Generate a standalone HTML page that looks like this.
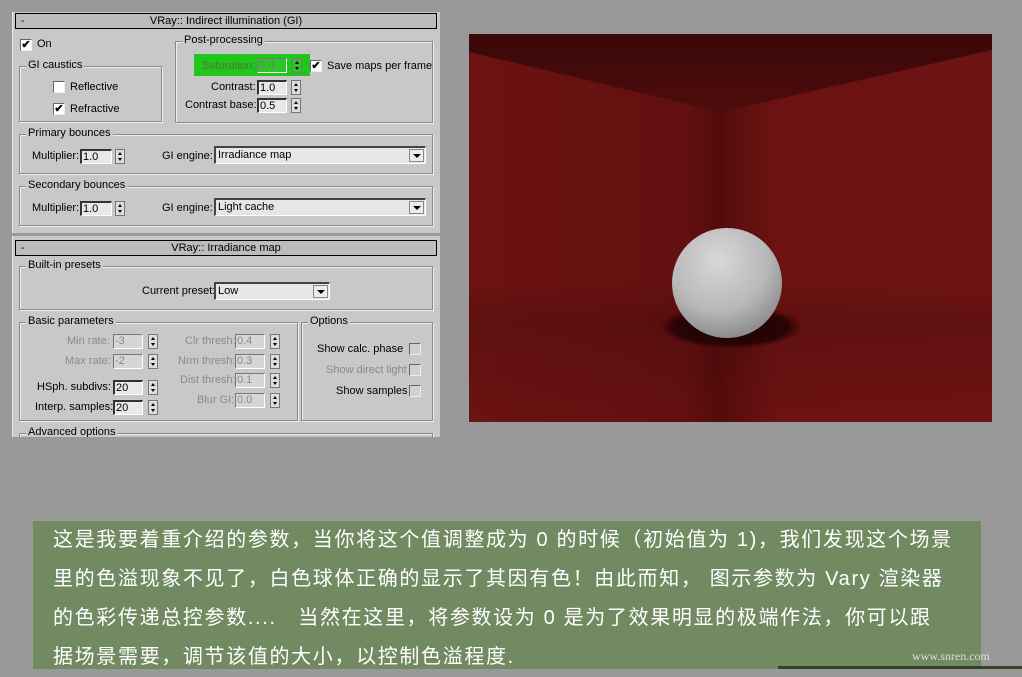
<!DOCTYPE html>
<html><head><meta charset="utf-8">
<style>
*{margin:0;padding:0;box-sizing:border-box}
body{width:1022px;height:669px;background:#999;position:relative;overflow:hidden;font-family:"Liberation Sans",Arial,sans-serif;font-size:11px;color:#000}
.a{position:absolute;white-space:nowrap}
.panel{position:absolute;left:12px;top:12px;width:428px;height:426px;background:#c8c8c8;border-left:1px solid #e6e6e6}
.bar{position:absolute;height:16px;border:1px solid #000;background:#bcbcbc;text-align:center;line-height:14px;font-size:11px}
.bar span{position:absolute;left:5px}
.grp{position:absolute;border:1px solid #888;box-shadow:1px 1px 0 #eee, inset 1px 1px 0 #eee}
.grp>.t{position:absolute;top:-8px;left:6px;background:#c8c8c8;padding:0 2px;font-size:11px}
.cb{position:absolute;width:12px;height:12px;background:#fff;border-top:1px solid #666;border-left:1px solid #666;border-right:1px solid #eee;border-bottom:1px solid #eee;font-size:11px;line-height:10px;text-align:center;font-weight:bold}
.cb.dis{background:#d0d0d0}
.in{position:absolute;height:15px;background:#e8e8e8;border-top:2px solid #333;border-left:2px solid #333;border-right:1px solid #fff;border-bottom:1px solid #fff;font-size:11px;line-height:12px;padding-left:1px}
.in.dis{border-color:#777 #fff #fff #777;border-width:1px;color:#888;background:#d6d6d6}
.sp{position:absolute;width:10px;height:15px;background:#ddd;border:1px solid #777}
.sp:before{content:"";position:absolute;left:2px;top:2px;border:2px solid transparent;border-bottom:3px solid #000;border-top:0}
.sp:after{content:"";position:absolute;left:2px;bottom:2px;border:2px solid transparent;border-top:3px solid #000;border-bottom:0}
.dd{position:absolute;height:18px;background:#e6e6e6;border-top:2px solid #444;border-left:2px solid #444;border-right:1px solid #fff;border-bottom:1px solid #fff;font-size:11px;line-height:14px;padding-left:2px}
.dd i{position:absolute;right:1px;top:1px;width:15px;height:13px;background:#ececec;border:1px solid #888}
.dd i:after{content:"";position:absolute;left:3px;top:4px;border:4px solid transparent;border-top:4px solid #000;border-bottom:0}
.g{color:#8a8a8a}
.txt{position:absolute;left:33px;top:521px;width:948px;height:148px;background:#718a62;color:#fff;font-family:"Liberation Sans","Noto Sans CJK SC",sans-serif;font-size:20px;letter-spacing:1.65px;line-height:39px;padding:0 0 0 20px}
</style></head><body>

<div class="panel"></div>
<div class="bar a" style="left:15px;top:13px;width:422px"><span>-</span>VRay:: Indirect illumination (GI)</div>

<div class="cb" style="left:20px;top:39px">✔</div><div class="a" style="left:37px;top:38px">On</div>

<div class="grp" style="left:19px;top:66px;width:143px;height:56px"><div class="t">GI caustics</div></div>
<div class="cb" style="left:53px;top:81px"></div><div class="a" style="left:70px;top:81px">Reflective</div>
<div class="cb" style="left:53px;top:103px">✔</div><div class="a" style="left:70px;top:103px">Refractive</div>

<div class="grp" style="left:175px;top:41px;width:258px;height:82px"><div class="t">Post-processing</div></div>
<div class="a" style="left:194px;top:54px;width:116px;height:22px;background:#22c41e"></div>
<div class="a" style="left:202px;top:60px;color:#4a7a3a">Saturation:</div>
<div class="in dis" style="left:257px;top:58px;width:30px;background:#2cc628;color:#5a8a4a">0.0</div>
<div class="sp" style="left:292px;top:58px;background:#2cc628"></div>
<div class="cb" style="left:310px;top:60px">✔</div><div class="a" style="left:327px;top:60px">Save maps per frame</div>
<div class="a" style="left:211px;top:81px">Contrast:</div>
<div class="in" style="left:257px;top:80px;width:30px">1.0</div><div class="sp" style="left:291px;top:80px"></div>
<div class="a" style="left:185px;top:99px">Contrast base:</div>
<div class="in" style="left:257px;top:98px;width:30px">0.5</div><div class="sp" style="left:291px;top:98px"></div>

<div class="grp" style="left:19px;top:134px;width:414px;height:40px"><div class="t">Primary bounces</div></div>
<div class="a" style="left:32px;top:150px">Multiplier:</div>
<div class="in" style="left:80px;top:149px;width:32px">1.0</div><div class="sp" style="left:115px;top:149px"></div>
<div class="a" style="left:162px;top:150px">GI engine:</div>
<div class="dd" style="left:214px;top:146px;width:212px">Irradiance map<i></i></div>

<div class="grp" style="left:19px;top:186px;width:414px;height:40px"><div class="t">Secondary bounces</div></div>
<div class="a" style="left:32px;top:202px">Multiplier:</div>
<div class="in" style="left:80px;top:201px;width:32px">1.0</div><div class="sp" style="left:115px;top:201px"></div>
<div class="a" style="left:162px;top:202px">GI engine:</div>
<div class="dd" style="left:214px;top:198px;width:212px">Light cache<i></i></div>

<div class="a" style="left:12px;top:233px;width:428px;height:3px;background:#999"></div>
<div class="bar a" style="left:15px;top:240px;width:422px"><span>-</span>VRay:: Irradiance map</div>

<div class="grp" style="left:19px;top:266px;width:414px;height:44px"><div class="t">Built-in presets</div></div>
<div class="a" style="left:142px;top:285px">Current preset:</div>
<div class="dd" style="left:214px;top:282px;width:116px">Low<i></i></div>

<div class="grp" style="left:19px;top:322px;width:279px;height:99px"><div class="t">Basic parameters</div></div>
<div class="a g" style="left:67px;top:335px">Min rate:</div><div class="in dis" style="left:113px;top:334px;width:30px">-3</div><div class="sp" style="left:148px;top:334px"></div>
<div class="a g" style="left:65px;top:355px">Max rate:</div><div class="in dis" style="left:113px;top:354px;width:30px">-2</div><div class="sp" style="left:148px;top:354px"></div>
<div class="a" style="left:37px;top:381px">HSph. subdivs:</div><div class="in" style="left:113px;top:380px;width:30px">20</div><div class="sp" style="left:148px;top:380px"></div>
<div class="a" style="left:35px;top:401px">Interp. samples:</div><div class="in" style="left:113px;top:400px;width:30px">20</div><div class="sp" style="left:148px;top:400px"></div>
<div class="a g" style="left:185px;top:335px">Clr thresh:</div><div class="in dis" style="left:235px;top:334px;width:30px">0.4</div><div class="sp" style="left:270px;top:334px"></div>
<div class="a g" style="left:178px;top:355px">Nrm thresh:</div><div class="in dis" style="left:235px;top:354px;width:30px">0.3</div><div class="sp" style="left:270px;top:354px"></div>
<div class="a g" style="left:180px;top:374px">Dist thresh:</div><div class="in dis" style="left:235px;top:373px;width:30px">0.1</div><div class="sp" style="left:270px;top:373px"></div>
<div class="a g" style="left:197px;top:394px">Blur GI:</div><div class="in dis" style="left:235px;top:393px;width:30px">0.0</div><div class="sp" style="left:270px;top:393px"></div>

<div class="grp" style="left:301px;top:322px;width:132px;height:99px"><div class="t">Options</div></div>
<div class="a" style="left:317px;top:343px">Show calc. phase</div><div class="cb dis" style="left:409px;top:343px"></div>
<div class="a g" style="left:326px;top:364px">Show direct light</div><div class="cb dis" style="left:409px;top:364px"></div>
<div class="a" style="left:336px;top:385px">Show samples</div><div class="cb dis" style="left:409px;top:385px"></div>

<div class="grp" style="left:19px;top:433px;width:414px;height:10px"><div class="t">Advanced options</div></div>
<div class="a" style="left:0;top:437px;width:460px;height:40px;background:#999"></div>

<svg class="a" style="left:469px;top:34px" width="523" height="388" viewBox="0 0 523 388">
<defs>
<linearGradient id="wl" x1="0" x2="1"><stop offset="0" stop-color="#6c1212"/><stop offset=".85" stop-color="#641010"/><stop offset="1" stop-color="#520b0b"/></linearGradient>
<linearGradient id="wr" x1="0" x2="1"><stop offset="0" stop-color="#560c0c"/><stop offset=".2" stop-color="#6c1212"/><stop offset="1" stop-color="#6e1313"/></linearGradient>
<linearGradient id="fl" x1="0" y1="0" x2="0" y2="1"><stop offset="0" stop-color="#000" stop-opacity="0"/><stop offset=".25" stop-color="#000" stop-opacity=".12"/><stop offset="1" stop-color="#000" stop-opacity="0"/></linearGradient>
<linearGradient id="ce" x1="0" y1="0" x2="0" y2="1"><stop offset="0" stop-color="#3a0808"/><stop offset="1" stop-color="#4e0c0c"/></linearGradient>
<radialGradient id="sph" cx=".42" cy=".3" r=".75"><stop offset="0" stop-color="#d8d8d8"/><stop offset=".6" stop-color="#b8b8b8"/><stop offset="1" stop-color="#858585"/></radialGradient>
<radialGradient id="sh" cx=".5" cy=".5" r=".5"><stop offset="0" stop-color="#1a0202"/><stop offset=".8" stop-color="#2a0404"/><stop offset="1" stop-color="#3a0606" stop-opacity="0"/></radialGradient>
</defs>
<polygon points="0,0 252,0 252,388 0,388" fill="url(#wl)"/>
<polygon points="252,0 523,0 523,388 252,388" fill="url(#wr)"/>
<rect y="250" width="523" height="138" fill="url(#fl)"/>
<polygon points="0,0 523,0 523,16 252,78 0,18" fill="url(#ce)"/>
<ellipse cx="262" cy="293" rx="72" ry="22" fill="url(#sh)"/>
<circle cx="258" cy="249" r="55" fill="url(#sph)"/>
</svg>

<div class="txt">这是我要着重介绍的参数，当你将这个值调整成为 0 的时候（初始值为 1)，我们发现这个场景<br>里的色溢现象不见了，白色球体正确的显示了其因有色！由此而知， 图示参数为 Vary 渲染器<br>的色彩传递总控参数....&nbsp;&nbsp;&nbsp;当然在这里，将参数设为 0 是为了效果明显的极端作法，你可以跟<br>据场景需要，调节该值的大小，以控制色溢程度.</div>
<div class="a" style="left:778px;top:666px;width:244px;height:3px;background:#33442a"></div>
<div class="a" style="left:912px;top:649px;font-family:'Liberation Serif',serif;font-size:12px;color:#ddd">www.snren.com</div>
</body></html>
